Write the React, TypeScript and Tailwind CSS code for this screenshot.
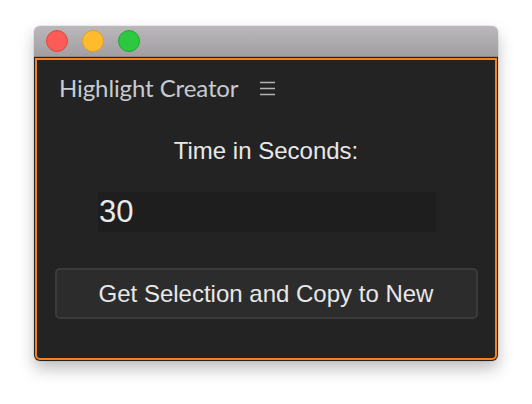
export default function App() {
  return (
    <div className="w-[532px] h-[404px] bg-white pt-[26px] pl-[34px]">
      <div className="w-[464px] h-[335px] rounded-[6px] overflow-hidden flex flex-col shadow-[0_0_1px_rgba(0,0,0,0.5),0_8px_16px_rgba(0,0,0,0.25)]">
        {/* title bar */}
        <div className="h-[31px] shrink-0 flex items-center gap-[14px] pl-[12px] bg-gradient-to-b from-[#bab8ba] to-[#a19fa1] border-b border-[#8b898b]">
          <span className="w-[22px] h-[22px] rounded-full bg-[#fc5b57] border border-[#e1463f]" />
          <span className="w-[22px] h-[22px] rounded-full bg-[#febb2e] border border-[#e0a028]" />
          <span className="w-[22px] h-[22px] rounded-full bg-[#2bc840] border border-[#1ea931]" />
        </div>
        {/* panel */}
        <div className="flex-1 bg-[#232323] px-[1px] pt-[1px] pb-[1px]">
          <div className="h-full border-2 border-[#f7811f] rounded-b-[5px] flex flex-col items-center">
            <div className="self-stretch flex items-center pl-[22px] pt-[11px] h-[44px]">
              <span className="text-[24px] text-[#c8cbd0] font-['Lato',sans-serif] tracking-[-0.1px]">Highlight Creator</span>
              <svg className="ml-[20px] mt-[2px]" width="17" height="15" viewBox="0 0 17 15">
                <path d="M1 1.5h15M1 7.5h15M1 13.5h15" stroke="#b4b4b4" strokeWidth="1.4" />
              </svg>
            </div>
            <div className="mt-[33px] text-[24px] leading-[28px] text-[#e8e8e8] font-['Liberation_Sans',Arial,sans-serif]">
              Time in Seconds:
            </div>
            <div className="mt-[27px] w-[338px] h-[40px] bg-[#1e1e1e] flex items-center pl-[1px] ml-[2px] text-[31px] text-[#eaeaea] font-['Liberation_Sans',Arial,sans-serif]">
              30
            </div>
            <button className="mt-[36px] w-[423px] h-[51px] rounded-[5px] border-2 border-[#3b3b3b] bg-[#2c2c2c] text-[24px] text-[#e8e8e8] font-['Liberation_Sans',Arial,sans-serif]">
              Get Selection and Copy to New
            </button>
          </div>
        </div>
      </div>
    </div>
  );
}
